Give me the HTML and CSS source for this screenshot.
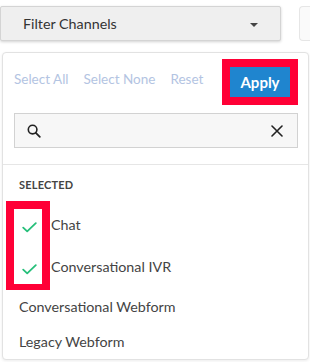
FILE: index.html
```html
<!DOCTYPE html>
<html lang="en">
<head>
  <meta charset="UTF-8" />
  <meta name="viewport" content="width=device-width, initial-scale=1.0"/>
  <title>Filter Channels</title>
  <link rel="stylesheet" href="styles.css">
</head>
<body>

  <div class="toolbar">
    <button class="filter-btn">
      <span>Filter Channels</span>
      <span class="caret"></span>
    </button>
    <div class="next-field"></div>
  </div>

  <div class="panel">
    <div class="panel-head">
      <a class="link">Select All</a>
      <a class="link">Select None</a>
      <a class="link">Reset</a>
      <button class="apply-btn">Apply</button>
    </div>

    <div class="search">
      <svg class="search-icon" width="14" height="14" viewBox="0 0 14 14">
        <circle cx="5.6" cy="5.6" r="4.3" fill="none" stroke="#222" stroke-width="1.6"/>
        <line x1="8.8" y1="8.8" x2="12.8" y2="12.8" stroke="#222" stroke-width="1.8" stroke-linecap="round"/>
      </svg>
      <input type="text">
      <svg class="clear-icon" width="12" height="12" viewBox="0 0 12 12">
        <path d="M1 1 L11 11 M11 1 L1 11" stroke="#222" stroke-width="1.6" stroke-linecap="round"/>
      </svg>
    </div>

    <div class="divider"></div>

    <div class="section-label">SELECTED</div>
    <ul class="options">
      <li class="option checked">
        <span class="check"><svg width="15" height="11" viewBox="0 0 15 11"><path d="M1.2 5.6 L5.2 9.4 L13.8 1.2" fill="none" stroke="#26bf7a" stroke-width="1.8" stroke-linecap="round" stroke-linejoin="round"/></svg></span>
        Chat
      </li>
      <li class="option checked">
        <span class="check"><svg width="15" height="11" viewBox="0 0 15 11"><path d="M1.2 5.6 L5.2 9.4 L13.8 1.2" fill="none" stroke="#26bf7a" stroke-width="1.8" stroke-linecap="round" stroke-linejoin="round"/></svg></span>
        Conversational IVR
      </li>
      <li class="option webform">Conversational Webform</li>
      <li class="option legacy">Legacy Webform</li>
    </ul>

    <!-- highlight around the check column -->
    <div class="mark-box"></div>
  </div>

</body>
</html>
```

FILE: styles.css
```css
body {
  margin: 0;
  background: white;
  font-family: Lato, "Open Sans", sans-serif;
  color: #333;
  width: 310px;
  height: 362px;
  overflow: hidden;
}

.toolbar {
  display: flex;
  padding-top: 6px;
  gap: 18px;
}

.filter-btn {
  display: flex;
  align-items: center;
  justify-content: space-between;
  box-sizing: border-box;
  width: 281px;
  height: 35px;
  padding: 0 22px 0 22px;
  margin-left: 0;
  background-color: #efefef;
  border: 1px solid #d4d4d4;
  border-radius: 2px;
  box-shadow: 0 1px 3px rgba(0, 0, 0, 0.18);
  font-family: Lato, sans-serif;
  font-size: 14.3px;
  color: #333;
}

.caret {
  width: 0;
  height: 0;
  border-left: 4px solid transparent;
  border-right: 4px solid transparent;
  border-top: 4px solid #444;
  margin-top: 2px;
}

.next-field {
  flex: 1;
  height: 33px;
  border: 1px solid #e6e6e6;
  border-right: none;
  border-radius: 4px 0 0 4px;
  background: #fafafa;
}

.panel {
  position: relative;
  box-sizing: border-box;
  margin: 11px 0 0 2px;
  width: 307px;
  height: 308px;
  background: white;
  border: 1px solid #e2e2e2;
  border-radius: 4px;
  box-shadow: 0 1px 3px rgba(0, 0, 0, 0.08);
}

.panel-head {
  display: flex;
  align-items: center;
  padding: 14px 18px 0 11px;
}

.link {
  font-size: 13.5px;
  color: #b3c4e2;
  margin-right: 15px;
  margin-top: -7px;
}

.apply-btn {
  margin-left: auto;
  width: 60px;
  height: 30px;
  border: none;
  background-color: #1f85cf;
  color: white;
  font-family: Lato, sans-serif;
  font-size: 15px;
  font-weight: bold;
  outline: 8px solid #ff0036;
}

.search {
  display: flex;
  align-items: center;
  box-sizing: border-box;
  height: 35px;
  margin: 16px 10px 0 11px;
  padding: 0 14px 0 12px;
  background: #f7f7f7;
  border: 1px solid #d2d2d2;
}

.search input {
  flex: 1;
  border: none;
  background: transparent;
  outline: none;
}

.divider {
  margin-top: 16px;
  border-top: 1px solid #e6e6e6;
}

.section-label {
  padding: 13px 0 0 16px;
  height: 22px;
  font-size: 11px;
  font-weight: bold;
  color: #444;
  letter-spacing: 0.2px;
}

.options {
  list-style: none;
  margin: 0;
  padding: 3px 0 0 16px;
}

.option {
  display: flex;
  align-items: center;
  height: 40px;
  font-size: 14.3px;
  color: #444;
}

.option.checked {
  height: 42px;
}

.option.webform {
  height: 38px;
}

.option.legacy {
  height: 33px;
}

.check {
  display: flex;
  width: 32px;
  padding: 6px 0 0 3px;
  box-sizing: border-box;
}

.mark-box {
  position: absolute;
  left: 3px;
  top: 148px;
  width: 28px;
  height: 75px;
  border: 8px solid #ff0036;
  border-bottom-width: 6px;
}
```
